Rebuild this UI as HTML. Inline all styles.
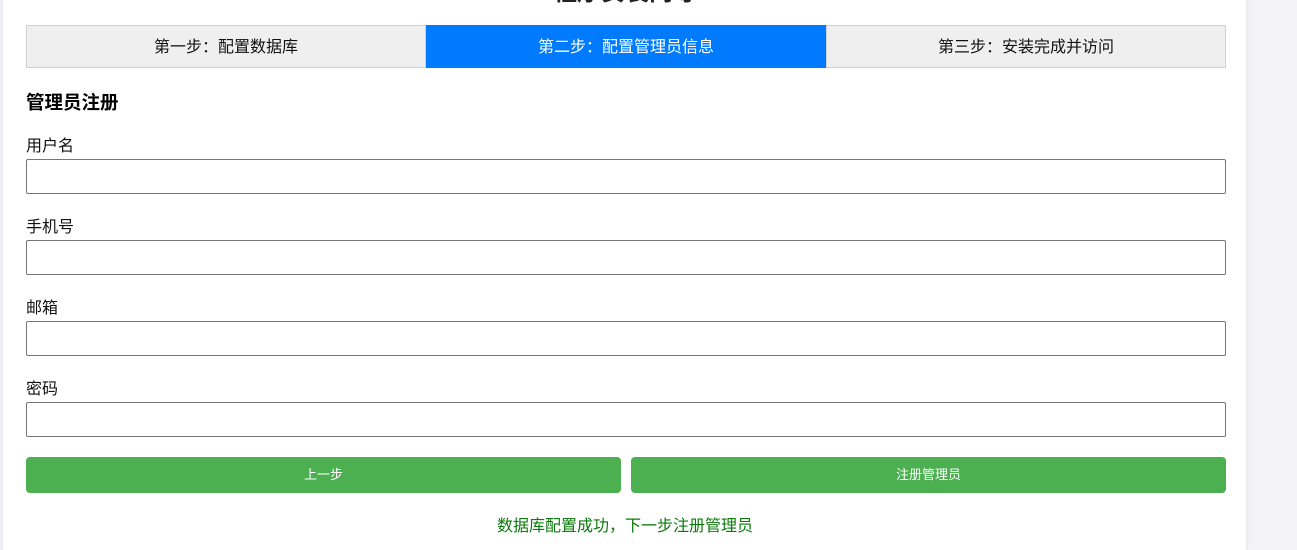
<!DOCTYPE html>
<html><head><meta charset="utf-8"><style>
body{margin:0;width:1297px;height:550px;overflow:hidden;background:#f2f2f7;font-family:"Liberation Sans","Noto Sans CJK SC",sans-serif;}
.panel{position:absolute;left:3px;top:0;width:1243px;height:550px;background:#fff;box-shadow:0 0 4px rgba(0,0,0,.08);}
h1{position:absolute;left:0;width:1250px;text-align:center;top:-28px;margin:0;font-size:24px;font-weight:bold;color:#222;}
.steps{position:absolute;left:26px;top:25px;width:1200px;height:43px;display:flex;}
.steps div{flex:1;border:1px solid #d0d0d0;background:#efefef;text-align:center;line-height:43px;font-size:16px;color:#111;box-sizing:border-box;}
.steps div.on{background:#007bff;border-color:#007bff;color:#fff;}
h2{position:absolute;left:26px;top:89px;margin:0;font-size:18.5px;font-weight:bold;color:#000;}
.lab{position:absolute;left:26px;font-size:16px;color:#111;}
.inp{position:absolute;left:26px;width:1200px;height:35px;border:1px solid #777;border-radius:2px;box-sizing:border-box;}
.btn{position:absolute;top:457px;height:36px;width:595px;background:#4caf50;border-radius:4px;color:#fff;font-size:13px;text-align:center;line-height:36px;}
.msg{position:absolute;top:512px;left:0;width:1250px;text-align:center;font-size:16px;color:#0a7a0a;}
</style></head><body>
<div class="panel"></div>
<h1>程序安装向导</h1>
<div class="steps"><div>第一步：配置数据库</div><div class="on">第二步：配置管理员信息</div><div>第三步：安装完成并访问</div></div>
<h2>管理员注册</h2>
<div class="lab" style="top:132px">用户名</div><div class="inp" style="top:159px"></div>
<div class="lab" style="top:213px">手机号</div><div class="inp" style="top:240px"></div>
<div class="lab" style="top:294px">邮箱</div><div class="inp" style="top:321px"></div>
<div class="lab" style="top:375px">密码</div><div class="inp" style="top:402px"></div>
<div class="btn" style="left:26px">上一步</div>
<div class="btn" style="left:631px">注册管理员</div>
<div class="msg">数据库配置成功，下一步注册管理员</div>
</body></html>
